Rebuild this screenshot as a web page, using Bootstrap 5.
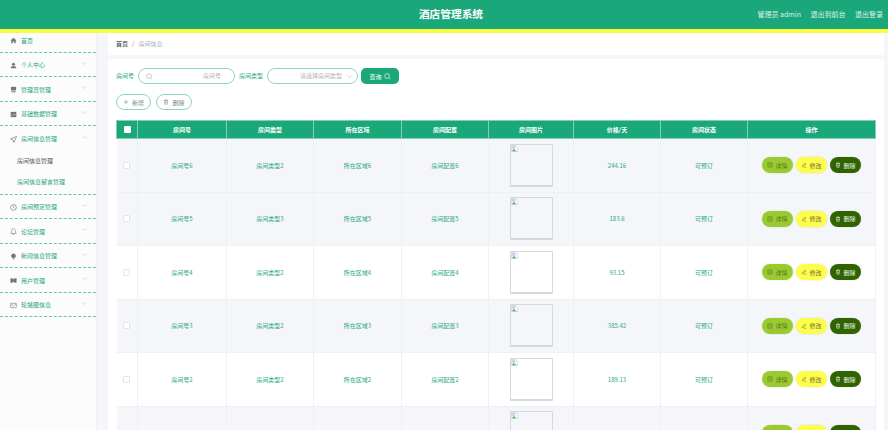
<!DOCTYPE html>
<html lang="zh-CN">
<head>
<meta charset="utf-8">
<title>酒店管理系统</title>
<link href="https://cdn.jsdelivr.net/npm/bootstrap@5.3.0/dist/css/bootstrap.min.css" rel="stylesheet">
<style>
html,body{height:430px;overflow:hidden;}
body{font-family:"Noto Sans CJK SC","Liberation Sans",sans-serif;font-size:6px;line-height:1.2;background:#f5f6fa;color:#2aa981;}
svg{display:block;flex:none;}
.top-bar{height:33px;background:#1aa87a;border-bottom:4px solid #fbfb3e;color:#dff2eb;position:relative;padding-left:14px;}
.top-title{font-size:10.7px;font-weight:700;color:#fff;}
.top-links{right:5px;top:0;bottom:0;position:absolute;gap:9.500px;font-size:7px;}
.shell{height:397px;}
.side-col{width:97px;flex:none;background:#fcfcfc;border-right:1px solid #f0f1f4;height:100%;}
.side-link{height:24.5px;padding:1.500px 10px 0;gap:4px;border-bottom:1px dashed #63c9a7;color:#25a67c;}
.side-link.first{height:19.5px;padding-top:0;padding-bottom:3px;}
.side-link .chev{margin-left:auto;margin-right:-2px;margin-top:-4px;color:#bbb;}
.side-link svg.ico{color:#72767f;}
.side-sub{height:21.5px;padding-left:17px;color:#25a67c;padding-bottom:2px;}
.side-sub.on{color:#555;}
.side-subs{border-bottom:1px dashed #63c9a7;}
.main-col{margin-left:11px;width:776px;}
.crumb-box{height:22px;background:#fff;padding:0 8px;gap:4px;color:#a9afbc;}
.crumb-box b{color:#444;font-weight:500;}
.crumb-box i{color:#f0623d;font-style:normal;}
.body-box{margin-top:4px;background:#fff;height:371px;padding:9px 9px 0 8px;overflow:hidden;}
.find-row{height:16px;gap:4px;}
.pill-field{height:16px;border:1px solid #8ad8bc;border-radius:8px;padding:0 7px;gap:4px;color:#b4b4b4;}
.pill-field.room{width:97px;padding-right:13px;}
.pill-field.kind{width:91px;padding-right:4px;}
.pill-field span{margin-left:auto;}
.go-btn{height:16px;width:38px;background:#1aa87a;border-radius:5px;border:0;color:#fff;font-size:6px;gap:2px;padding:0;margin-left:-1px;}
.act-row{margin-top:10px;height:16px;gap:5px;}
.ghost-btn{height:16px;width:35px;border:1px solid #8ad8bc;border-radius:8px;background:#fff;color:#7a8a84;font-size:6px;gap:3px;padding:0;}
.ghost-btn.wide{width:36px;}
.grid-wrap{margin-top:10px;width:759px;}
table.room-grid{table-layout:fixed;width:759px;margin:0;border-collapse:collapse;font-size:6px;--bs-table-bg:transparent;}
.room-grid th{height:18px;padding:0;background:#1aa87a;color:#fff;font-weight:700;text-align:center;vertical-align:middle;border:1px solid #7fd0b5;}
.room-grid td{height:53.5px;padding:0;text-align:center;vertical-align:middle;color:#2aa981;border:0;border-right:1px solid #f0f1f5;border-bottom:1px solid #eef0f4;}
.room-grid tr.tint td{background:#f5f6fa;}
.room-grid tr.plain td{background:#fff;}
.tick{display:block;width:7px;height:7px;margin:0 auto;border:1px solid #e3e5ea;border-radius:1px;background:#fff;}
.tick.head{border-color:#fff;}
.pic-box{width:43px;height:43px;margin:0 auto;border:1px solid #d6d8dc;border-bottom-width:2px;border-radius:1px;padding:0;}
.pill-acts{gap:3px;padding-left:14px;}
.act-pill{height:16px;width:31px;border:0;border-radius:8px;font-size:6px;gap:2px;padding:0;box-shadow:0 0 0 1px rgba(0,0,0,.04);}
.act-pill.see{background:#9acb2e;color:#5b6f2c;}
.act-pill.edit{background:#fdfd4c;color:#6c6c3a;}
.act-pill.drop{background:#2f6400;color:#eef3e6;}
</style>
</head>
<body>
<svg width="0" height="0" class="position-absolute">
<defs>
<symbol id="i-search" viewBox="0 0 16 16"><circle cx="7" cy="7" r="5.5" fill="none" stroke="currentColor" stroke-width="1.4"/><path d="M11 11l3.500 3.500" stroke="currentColor" stroke-width="1.400" fill="none"/></symbol>
<symbol id="i-chev" viewBox="0 0 16 16"><path d="M3 5.500l5 5 5-5" fill="none" stroke="currentColor" stroke-width="1.300"/></symbol>
<symbol id="i-up" viewBox="0 0 16 16"><path d="M3 10.500l5-5 5 5" fill="none" stroke="currentColor" stroke-width="1.300"/></symbol>
<symbol id="i-doc" viewBox="0 0 16 16"><rect x="2.500" y="2.500" width="11" height="11" fill="none" stroke="currentColor" stroke-width="1.500"/><path d="M5 6h6M5 9.500h6" stroke="currentColor" stroke-width="1.200"/></symbol>
<symbol id="i-pen" viewBox="0 0 16 16"><path d="M3 13l2-4 6-6 2 2-6 6zM8 14h6" fill="none" stroke="currentColor" stroke-width="1.500"/></symbol>
<symbol id="i-bin" viewBox="0 0 16 16"><path d="M2.500 4h11M6 4V2h4v2M4 4l.7 10h6.600L12 4M6.500 7v4.500M9.500 7v4.500" fill="none" stroke="currentColor" stroke-width="1.400"/></symbol>
<symbol id="i-broken" viewBox="0 0 16 16"><path d="M1 1h10l4 4v10H1z" fill="#fff" stroke="#aeb4bd"/><path d="M2 2h8v7H2z" fill="#c5d6f2"/><path d="M2 14l4-5 4 3 2 2z" fill="#4caf50"/></symbol>
</defs>
</svg>

<header class="top-bar d-flex align-items-center justify-content-center">
  <div class="top-title">酒店管理系统</div>
  <div class="top-links d-flex align-items-center">
    <span>管理员 admin</span><span>退出到前台</span><span>退出登录</span>
  </div>
</header>

<div class="shell d-flex">
  <nav class="side-col">
    <div class="side-link first d-flex align-items-center"><svg class="ico" width="7" height="7" viewBox="0 0 16 16"><path d="M8 1.500L1 8h2v6.500h3.500V10h3v4.500H13V8h2z" fill="currentColor"/></svg>首页</div>
    <div class="side-link d-flex align-items-center"><svg class="ico" width="7" height="7" viewBox="0 0 16 16"><circle cx="8" cy="5" r="3.500" fill="currentColor"/><path d="M1.500 14.500c0-4 3-5.500 6.500-5.500s6.500 1.500 6.500 5.500z" fill="currentColor"/></svg>个人中心<svg class="chev" width="7" height="7"><use href="#i-chev"/></svg></div>
    <div class="side-link d-flex align-items-center"><svg class="ico" width="7" height="7" viewBox="0 0 16 16"><rect x="2" y="1.500" width="12" height="9" rx="2" fill="currentColor"/><path d="M3.500 12h9v2.500h-9z" fill="currentColor"/></svg>管理员管理<svg class="chev" width="7" height="7"><use href="#i-chev"/></svg></div>
    <div class="side-link d-flex align-items-center"><svg class="ico" width="7" height="7" viewBox="0 0 16 16"><rect x="1.500" y="2" width="13" height="12" fill="currentColor"/><path d="M3 11l3-3 2 2 3-3 2 2" stroke="#fff" fill="none"/></svg>基础数据管理<svg class="chev" width="7" height="7"><use href="#i-chev"/></svg></div>
    <div class="side-link border-0 d-flex align-items-center"><svg class="ico" width="7" height="7" viewBox="0 0 16 16"><path d="M15 1L1 7l6 2 2 6z" fill="none" stroke="currentColor" stroke-width="1.500"/></svg>房间信息管理<svg class="chev" width="7" height="7"><use href="#i-up"/></svg></div>
    <div class="side-subs">
      <div class="side-sub on d-flex align-items-center">房间信息管理</div>
      <div class="side-sub d-flex align-items-center">房间信息留言管理</div>
    </div>
    <div class="side-link d-flex align-items-center"><svg class="ico" width="7" height="7" viewBox="0 0 16 16"><circle cx="8" cy="8" r="6.500" fill="none" stroke="currentColor" stroke-width="1.500"/><path d="M8 3.500V8l3 2" fill="none" stroke="currentColor" stroke-width="1.200"/></svg>房间预定管理<svg class="chev" width="7" height="7"><use href="#i-chev"/></svg></div>
    <div class="side-link d-flex align-items-center"><svg class="ico" width="7" height="7" viewBox="0 0 16 16"><path d="M8 1.500c-3 0-4 2.500-4 5 0 3-2 5-2 6h12c0-1-2-3-2-6 0-2.500-1-5-4-5zM6 14.500h4" fill="none" stroke="currentColor" stroke-width="1.300"/></svg>论坛管理<svg class="chev" width="7" height="7"><use href="#i-chev"/></svg></div>
    <div class="side-link d-flex align-items-center"><svg class="ico" width="7" height="7" viewBox="0 0 16 16"><path d="M8 1a5.500 5.500 0 0 0-3 10l1 1.500h4l1-1.500A5.500 5.500 0 0 0 8 1zM6.500 14h3v1.500h-3z" fill="currentColor"/></svg>新闻信息管理<svg class="chev" width="7" height="7"><use href="#i-chev"/></svg></div>
    <div class="side-link d-flex align-items-center"><svg class="ico" width="7" height="7" viewBox="0 0 16 16"><path d="M1 3h4.500l2.500 2 2.500-2H15v10h-4.500L8 11l-2.500 2H1z" fill="currentColor"/></svg>用户管理<svg class="chev" width="7" height="7"><use href="#i-chev"/></svg></div>
    <div class="side-link d-flex align-items-center"><svg class="ico" width="7" height="7" viewBox="0 0 16 16"><rect x="1.500" y="3" width="13" height="10" rx="1" fill="none" stroke="currentColor" stroke-width="1.300"/><path d="M2 4l6 5 6-5" fill="none" stroke="currentColor" stroke-width="1.300"/></svg>轮播图信息<svg class="chev" width="7" height="7"><use href="#i-chev"/></svg></div>
  </nav>

  <main class="main-col">
    <div class="crumb-box d-flex align-items-center"><b>首页</b><i>/</i><span>房间信息</span></div>
    <section class="body-box">
      <div class="find-row d-flex align-items-center">
        <span>房间号</span>
        <div class="pill-field room d-flex align-items-center"><svg width="7" height="7"><use href="#i-search"/></svg><span>房间号</span></div>
        <span>房间类型</span>
        <div class="pill-field kind d-flex align-items-center"><span>请选择房间类型</span><svg width="7" height="7"><use href="#i-chev"/></svg></div>
        <button type="button" class="btn go-btn d-flex align-items-center justify-content-center">查询<svg width="7" height="7"><use href="#i-search"/></svg></button>
      </div>
      <div class="act-row d-flex">
        <button type="button" class="btn ghost-btn d-flex align-items-center justify-content-center"><svg width="6" height="6" viewBox="0 0 16 16"><path d="M8 2v12M2 8h12" stroke="currentColor" stroke-width="1.500"/></svg>新增</button>
        <button type="button" class="btn ghost-btn wide d-flex align-items-center justify-content-center"><svg width="6" height="6"><use href="#i-bin"/></svg>删除</button>
      </div>
      <div class="grid-wrap">
        <table class="table room-grid">
          <colgroup><col style="width:21px"><col style="width:89px"><col style="width:87px"><col style="width:88px"><col style="width:87px"><col style="width:85px"><col style="width:87px"><col style="width:87px"><col style="width:128px"></colgroup>
          <thead><tr><th><span class="tick head"></span></th><th>房间号</th><th>房间类型</th><th>所在区域</th><th>房间配置</th><th>房间图片</th><th>价格/天</th><th>房间状态</th><th>操作</th></tr></thead>
          <tbody id="rows"></tbody>
        </table>
      </div>
    </section>
  </main>
</div>

<script src="https://cdn.jsdelivr.net/npm/bootstrap@5.3.0/dist/js/bootstrap.bundle.min.js"></script>
<script>
const data=[[6,2,'244.16','tint'],[5,3,'183.6','tint'],[4,2,'93.15','plain'],[3,2,'385.42','tint'],[2,2,'189.13','plain'],[1,0,'','tint']];
const pic='<div class="pic-box"><svg width="7" height="7"><use href="#i-broken"/></svg></div>';
const acts='<div class="pill-acts d-flex align-items-center"><button type="button" class="btn act-pill see d-flex align-items-center justify-content-center"><svg width="6" height="6"><use href="#i-doc"/></svg>详情</button><button type="button" class="btn act-pill edit d-flex align-items-center justify-content-center"><svg width="6" height="6"><use href="#i-pen"/></svg>修改</button><button type="button" class="btn act-pill drop d-flex align-items-center justify-content-center"><svg width="6" height="6"><use href="#i-bin"/></svg>删除</button></div>';
document.getElementById('rows').innerHTML=data.map(d=>d[1]?`<tr class="${d[3]}"><td><span class="tick"></span></td><td>房间号${d[0]}</td><td>房间类型${d[1]}</td><td>所在区域${d[0]}</td><td>房间配置${d[0]}</td><td>${pic}</td><td>${d[2]}</td><td>可预订</td><td>${acts}</td></tr>`:`<tr class="${d[3]}"><td></td><td></td><td></td><td></td><td></td><td>${pic}</td><td></td><td></td><td>${acts}</td></tr>`).join('');
</script>
</body>
</html>
